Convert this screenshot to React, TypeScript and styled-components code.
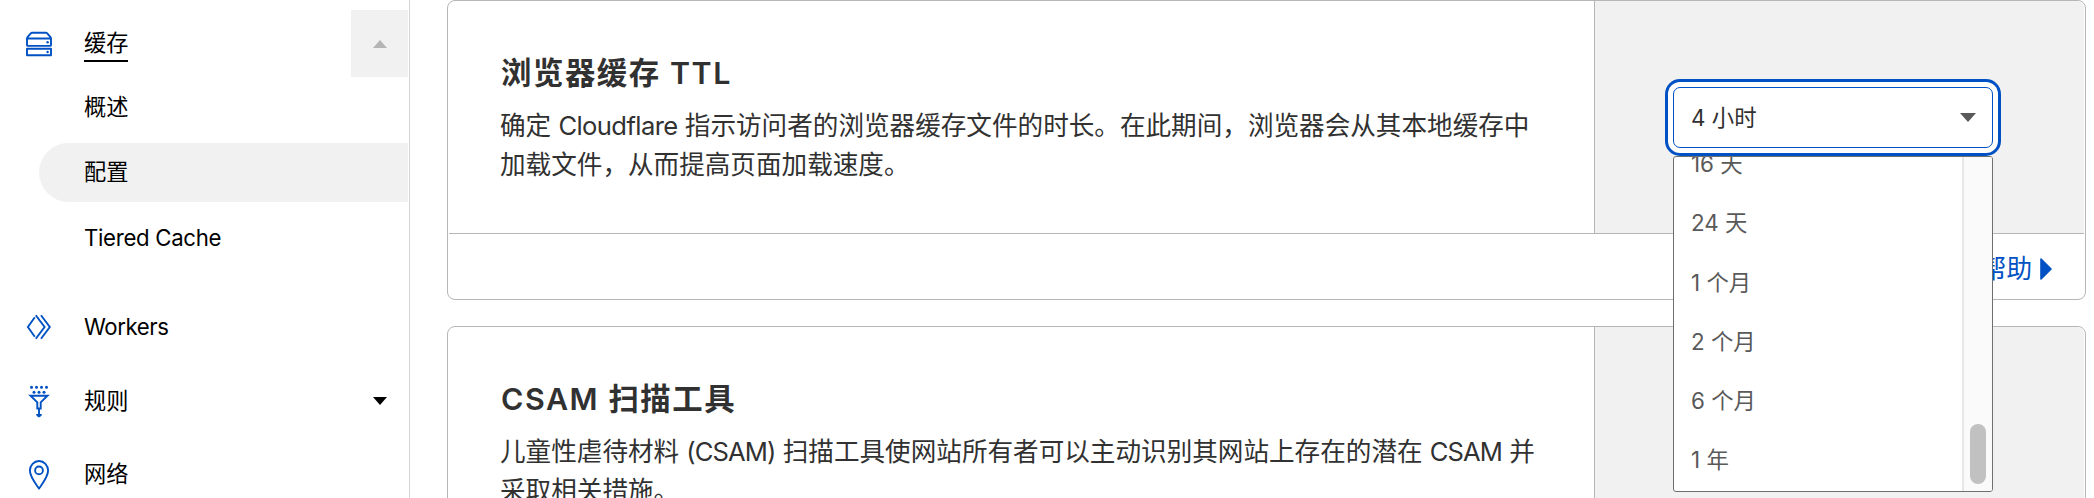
import React from 'react';
import styled, { createGlobalStyle } from 'styled-components';

const blue = '#0051c3';
const line = '#b6b6b6';
const panel = '#f1f1f1';

const GlobalStyle = createGlobalStyle`
  *, *::before, *::after { box-sizing: border-box; }
  body {
    margin: 0;
    background: #fff;
    color: #313131;
    font-family: Inter, "Noto Sans CJK SC", sans-serif;
    overflow: hidden;
  }
  h2, p, ul { margin: 0; padding: 0; }
  ul { list-style: none; }
`;

const Page = styled.div`
  display: flex;
  height: 498px;
  overflow: hidden;
`;

const Sidebar = styled.nav`
  flex: none;
  width: 410px;
  padding: 10px 1px 0 0;
  border-right: 1px solid #d5d5d5;
  color: #000;
  font-size: 22.2px;
  line-height: 34px;
`;

const NavList = styled.ul`
  display: flex;
  flex-direction: column;
  gap: 6.5px;
`;

const NavRow = styled.div`
  display: flex;
  align-items: center;
  height: 67px;
  padding-left: 19px;
`;

const NavIcon = styled.span`
  display: flex;
  width: 40px;
  height: 40px;
  margin-right: 25px;
`;

const NavLabel = styled.span<{ $current?: boolean }>`
  padding: ${p => (p.$current ? '1px 0' : '2px 0 0')};
  border-bottom: 2px solid ${p => (p.$current ? '#000' : 'transparent')};
  line-height: 32px;
`;

const Toggle = styled.button<{ $open?: boolean }>`
  display: flex;
  align-items: center;
  justify-content: center;
  width: 57px;
  height: 67px;
  margin-left: auto;
  padding: 0 0 0 1px;
  border: 0;
  background: ${p => (p.$open ? panel : 'transparent')};
`;

const SubList = styled.ul`
  display: flex;
  flex-direction: column;
  gap: 6.5px;
  padding: 0 0 20px 39px;
`;

const SubItem = styled.li<{ $active?: boolean }>`
  display: flex;
  align-items: center;
  height: 59px;
  padding-left: 45px;
  border-radius: 30px 0 0 30px;
  background: ${p => (p.$active ? panel : 'transparent')};
`;

const Latin = styled.span<{ $track: number }>`
  letter-spacing: ${p => p.$track}px;
`;

const Main = styled.main`
  display: flex;
  flex: none;
  flex-direction: column;
  gap: 26px;
  width: 1639px;
  margin-left: 37px;
`;

const Card = styled.section`
  flex: none;
  padding: 0 1px;
  border: 1px solid ${line};
  border-radius: 8px;
`;

const CardBody = styled.div`
  display: flex;
  height: 232px;
`;

const Description = styled.div`
  flex: 1;
  padding: 50px 50px 0 51px;
`;

const Title = styled.h2`
  margin: 0 0 10px 1px;
  font-size: 30.4px;
  font-weight: 600;
  letter-spacing: 1.55px;
  line-height: 45px;
`;

const Text = styled.p`
  font-size: 25.6px;
  line-height: 39px;
`;

const Control = styled.div`
  display: flex;
  justify-content: center;
  width: 490px;
  padding: 86px 13px 0 0;
  border-left: 1px solid ${line};
  border-top-right-radius: 7px;
  background: ${panel};
`;

const CardFooter = styled.div`
  display: flex;
  align-items: center;
  justify-content: flex-end;
  height: 66px;
  padding: 4px 32px 0 0;
  border-top: 1px solid ${line};
`;

const HelpLink = styled.a`
  display: flex;
  align-items: center;
  gap: 8px;
  color: ${blue};
  font-size: 25.6px;
  line-height: 38px;
`;

const Select = styled.div`
  position: relative;
  width: 320px;
  height: 61px;
`;

const SelectField = styled.div`
  display: flex;
  align-items: center;
  justify-content: space-between;
  height: 61px;
  padding: 0 16px 0 17px;
  border: 1px solid ${blue};
  border-radius: 7px;
  background: #fff;
  box-shadow: 0 0 0 5px #fff, 0 0 0 8px ${blue};
  font-size: 22.4px;
`;

const Value = styled.span`
  padding-bottom: 3px;
`;

const Menu = styled.div`
  position: absolute;
  top: 69px;
  left: 0;
  z-index: 2;
  display: flex;
  width: 320px;
  height: 336px;
  border: 1px solid #6f6f6f;
  border-radius: 3px;
  background: #fff;
  overflow: hidden;
`;

const Options = styled.ul`
  display: flex;
  flex: 1;
  flex-direction: column;
  justify-content: flex-end;
  padding-bottom: 1.5px;
  overflow: hidden;
`;

const Option = styled.li`
  flex: none;
  height: 59.25px;
  padding-left: 17px;
  color: #595959;
  font-size: 22.4px;
  line-height: 59px;
`;

const Track = styled.div`
  display: flex;
  align-items: flex-end;
  width: 30px;
  padding: 0 0 7px 6px;
  border-left: 2px solid #e8e8e8;
  background: #fafafa;
`;

const Thumb = styled.div`
  width: 16px;
  height: 60px;
  border-radius: 8px;
  background: #c1c1c1;
`;

const Caret = ({ up, color, w = 14, h = 8 }: { up?: boolean; color: string; w?: number; h?: number }) => (
  <svg width={w} height={h} viewBox="0 0 14 8" preserveAspectRatio="none">
    <path d={up ? 'M0 8L7 0l7 8z' : 'M0 0h14L7 8z'} fill={color} />
  </svg>
);

const Glyph = ({ children }: { children: React.ReactNode }) => (
  <svg width="40" height="40" viewBox="0 0 40 40" fill="none" stroke={blue} strokeWidth="1.9">
    {children}
  </svg>
);

const CacheIcon = () => (
  <Glyph>
    <path d="M8 14.500V21q0 .9.9.9h22.200q.9 0 .9-.9v-6.500q0-.7-.5-1.300l-3.500-4q-.4-.5-1-.5H13q-.6 0-1 .5l-3.500 4q-.5.6-.5 1.300zM8 14.500h24" />
    <path d="M8 24.700h24v6.600H8z" strokeLinejoin="round" />
    <circle cx="28.600" cy="18.200" r="1.200" fill={blue} stroke="none" />
    <circle cx="28.600" cy="28" r="1.200" fill={blue} stroke="none" />
  </Glyph>
);

const WorkersIcon = () => (
  <Glyph>
    <path d="M15.8 10.200L8.900 20l6.900 9.800M16.800 8.200L25.600 20l-8.800 11.800M22 8.200L30.800 20 22 31.800" />
  </Glyph>
);

const RulesIcon = () => (
  <Glyph>
    <g fill={blue} stroke="none">
      {[12.5, 17.5, 22.5, 27.5].map(x => <circle key={x} cx={x} cy="6.200" r="1.500" />)}
      {[15, 20, 25].map(x => <circle key={x} cx={x} cy="11.200" r="1.500" />)}
      <path d="M17 33h6q0 2-3 3.600Q17 35 17 33z" />
    </g>
    <path d="M11.500 14.700h17l-6.800 6.600v6.200h-3.400v-6.200zM20 28.500v5" />
  </Glyph>
);

const NetworkIcon = () => (
  <Glyph>
    <path d="M20 34.600C15.500 28.300 10.900 22.600 10.900 16.600a9.100 9.600 0 0 1 18.200 0C29.100 22.600 24.500 28.300 20 34.600z" strokeLinejoin="round" />
    <circle cx="20" cy="16.400" r="3.900" />
  </Glyph>
);

const options = ['16 天', '24 天', '1 个月', '2 个月', '6 个月', '1 年'];

export default function App() {
  return (
    <Page>
      <GlobalStyle />
      <Sidebar>
        <NavList>
          <li>
            <NavRow>
              <NavIcon><CacheIcon /></NavIcon>
              <NavLabel $current>缓存</NavLabel>
              <Toggle $open><Caret up color="#b5b5b5" /></Toggle>
            </NavRow>
            <SubList>
              <SubItem>概述</SubItem>
              <SubItem $active>配置</SubItem>
              <SubItem><Latin $track={-0.3}>Tiered Cache</Latin></SubItem>
            </SubList>
          </li>
          <li>
            <NavRow>
              <NavIcon><WorkersIcon /></NavIcon>
              <NavLabel><Latin $track={-0.4}>Workers</Latin></NavLabel>
            </NavRow>
          </li>
          <li>
            <NavRow>
              <NavIcon><RulesIcon /></NavIcon>
              <NavLabel>规则</NavLabel>
              <Toggle><Caret color="#000" /></Toggle>
            </NavRow>
          </li>
          <li>
            <NavRow>
              <NavIcon><NetworkIcon /></NavIcon>
              <NavLabel>网络</NavLabel>
            </NavRow>
          </li>
        </NavList>
      </Sidebar>
      <Main>
        <Card>
          <CardBody>
            <Description>
              <Title>浏览器缓存 TTL</Title>
              <Text>
                确定 <Latin $track={-0.6}>Cloudflare</Latin> 指示访问者的浏览器缓存文件的时长。在此期间，浏览器会从其本地缓存中加载文件，从而提高页面加载速度。
              </Text>
            </Description>
            <Control>
              <Select>
                <SelectField>
                  <Value>4 小时</Value>
                  <Caret color="#595959" w={16} h={9} />
                </SelectField>
                <Menu>
                  <Options>
                    {options.map(o => <Option key={o}>{o}</Option>)}
                  </Options>
                  <Track><Thumb /></Track>
                </Menu>
              </Select>
            </Control>
          </CardBody>
          <CardFooter>
            <HelpLink>
              帮助
              <svg width="12" height="22" viewBox="0 0 12 22">
                <path d="M1 1l10 10L1 21z" fill={blue} stroke={blue} strokeWidth="1.600" strokeLinejoin="round" />
              </svg>
            </HelpLink>
          </CardFooter>
        </Card>
        <Card>
          <CardBody>
            <Description>
              <Title>CSAM 扫描工具</Title>
              <Text>
                儿童性虐待材料 <Latin $track={-0.9}>(CSAM)</Latin> 扫描工具使网站所有者可以主动识别其网站上存在的潜在 <Latin $track={-0.9}>CSAM</Latin> 并采取相关措施。
              </Text>
            </Description>
            <Control />
          </CardBody>
        </Card>
      </Main>
    </Page>
  );
}
